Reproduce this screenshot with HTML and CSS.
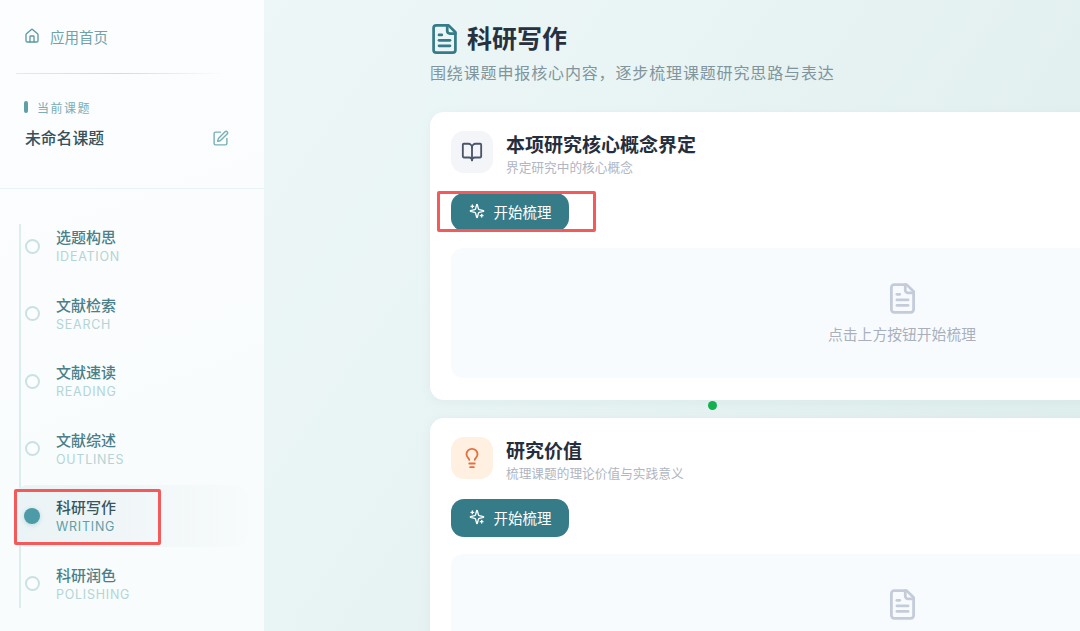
FILE: index.html
```html
<!DOCTYPE html>
<html lang="zh-CN">
<head>
<meta charset="utf-8">
<title>科研写作</title>
<link rel="stylesheet" href="styles.css">
</head>
<body>
<div class="app">
  <aside class="sidebar">
    <div class="side-top">
      <a class="home"><svg class="ic-home" viewBox="0 0 24 24"><path d="M15 21v-8a1 1 0 0 0-1-1h-4a1 1 0 0 0-1 1v8"/><path d="M3 10a2 2 0 0 1 .709-1.528l7-5.999a2 2 0 0 1 2.582 0l7 5.999A2 2 0 0 1 21 10v9a2 2 0 0 1-2 2H5a2 2 0 0 1-2-2z"/></svg><span>应用首页</span></a>
      <div class="side-rule"></div>
      <div class="cur-label"><i class="cur-bar"></i><span>当前课题</span></div>
      <div class="cur-row">
        <span class="cur-name">未命名课题</span>
        <svg class="ic-edit" viewBox="0 0 24 24"><path d="M12 3H5a2 2 0 0 0-2 2v14a2 2 0 0 0 2 2h14a2 2 0 0 0 2-2v-7"/><path d="M18.375 2.625a1 1 0 0 1 3 3l-9.013 9.014a2 2 0 0 1-.853.505l-2.873.84a.5.5 0 0 1-.62-.62l.84-2.873a2 2 0 0 1 .506-.852z"/></svg>
      </div>
    </div>
    <ul class="steps">
      <li class="step"><i class="dot"></i><div><div class="step-cn">选题构思</div><div class="step-en">IDEATION</div></div></li>
      <li class="step"><i class="dot"></i><div><div class="step-cn">文献检索</div><div class="step-en">SEARCH</div></div></li>
      <li class="step"><i class="dot"></i><div><div class="step-cn">文献速读</div><div class="step-en">READING</div></div></li>
      <li class="step"><i class="dot"></i><div><div class="step-cn">文献综述</div><div class="step-en">OUTLINES</div></div></li>
      <li class="step active"><i class="dot"></i><div><div class="step-cn">科研写作</div><div class="step-en">WRITING</div></div></li>
      <li class="step"><i class="dot"></i><div><div class="step-cn">科研润色</div><div class="step-en">POLISHING</div></div></li>
    </ul>
  </aside>
  <main class="main">
    <header class="head">
      <div class="head-row">
        <svg class="ic-doc" viewBox="3 1 18 22"><path d="M15 2H6a2 2 0 0 0-2 2v16a2 2 0 0 0 2 2h12a2 2 0 0 0 2-2V7Z"/><path d="M14 2v4a2 2 0 0 0 2 2h4"/><path d="M10 9H8"/><path d="M16 13H8"/><path d="M16 17H8"/></svg>
        <h1>科研写作</h1>
      </div>
      <p class="head-sub">围绕课题申报核心内容，逐步梳理课题研究思路与表达</p>
    </header>

    <section class="card">
      <div class="card-head">
        <div class="card-ic"><svg class="ic-book" viewBox="0 0 24 24"><path d="M12 7v14"/><path d="M3 18a1 1 0 0 1-1-1V4a1 1 0 0 1 1-1h5a4 4 0 0 1 4 4 4 4 0 0 1 4-4h5a1 1 0 0 1 1 1v13a1 1 0 0 1-1 1h-6a3 3 0 0 0-3 3 3 3 0 0 0-3-3z"/></svg></div>
        <div><h2>本项研究核心概念界定</h2><p>界定研究中的核心概念</p></div>
      </div>
      <button class="btn"><svg class="ic-spark" viewBox="0 0 24 24"><path d="M9.937 15.5A2 2 0 0 0 8.5 14.063l-6.135-1.582a.5.5 0 0 1 0-.962L8.5 9.936A2 2 0 0 0 9.937 8.5l1.582-6.135a.5.5 0 0 1 .963 0L14.063 8.5A2 2 0 0 0 15.5 9.937l6.135 1.581a.5.5 0 0 1 0 .964L15.5 14.063a2 2 0 0 0-1.437 1.437l-1.582 6.135a.5.5 0 0 1-.963 0z"/><path d="M5 3v4"/><path d="M3 5h4"/><path d="M19 17v4"/><path d="M17 19h4"/></svg><span>开始梳理</span></button>
      <div class="empty">
        <svg class="ic-empty" viewBox="3 1 18 22"><path d="M15 2H6a2 2 0 0 0-2 2v16a2 2 0 0 0 2 2h12a2 2 0 0 0 2-2V7Z"/><path d="M14 2v4a2 2 0 0 0 2 2h4"/><path d="M10 9H8"/><path d="M16 13H8"/><path d="M16 17H8"/></svg>
        <span>点击上方按钮开始梳理</span>
      </div>
    </section>

    <section class="card">
      <div class="card-head">
        <div class="card-ic orange"><svg class="ic-bulb" viewBox="0 0 24 24"><path d="M15 14c.2-1 .7-1.7 1.5-2.5 1-.9 1.5-2.2 1.5-3.5A6 6 0 0 0 6 8c0 1 .2 2.2 1.5 3.5.7.7 1.3 1.5 1.5 2.5"/><path d="M9 18h6"/><path d="M10 22h4"/></svg></div>
        <div><h2>研究价值</h2><p>梳理课题的理论价值与实践意义</p></div>
      </div>
      <button class="btn"><svg class="ic-spark" viewBox="0 0 24 24"><path d="M9.937 15.5A2 2 0 0 0 8.5 14.063l-6.135-1.582a.5.5 0 0 1 0-.962L8.5 9.936A2 2 0 0 0 9.937 8.5l1.582-6.135a.5.5 0 0 1 .963 0L14.063 8.5A2 2 0 0 0 15.5 9.937l6.135 1.581a.5.5 0 0 1 0 .964L15.5 14.063a2 2 0 0 0-1.437 1.437l-1.582 6.135a.5.5 0 0 1-.963 0z"/><path d="M5 3v4"/><path d="M3 5h4"/><path d="M19 17v4"/><path d="M17 19h4"/></svg><span>开始梳理</span></button>
      <div class="empty">
        <svg class="ic-empty" viewBox="3 1 18 22"><path d="M15 2H6a2 2 0 0 0-2 2v16a2 2 0 0 0 2 2h12a2 2 0 0 0 2-2V7Z"/><path d="M14 2v4a2 2 0 0 0 2 2h4"/><path d="M10 9H8"/><path d="M16 13H8"/><path d="M16 17H8"/></svg>
      </div>
    </section>
  </main>
  <div class="mark mark-btn"></div>
  <div class="mark mark-nav"></div>
  <i class="status-dot"></i>
</div>
</body>
</html>
```
FILE: styles.css
```css
* { box-sizing: border-box; }
html, body { margin: 0; height: 100%; overflow: hidden; }
body { font-family: Inter, "Noto Sans CJK SC", sans-serif; color: #2a3342; }
h1, h2, p, ul { margin: 0; padding: 0; }
svg { fill: none; stroke: currentColor; stroke-linecap: round; stroke-linejoin: round; stroke-width: 2; flex: none; display: block; }

.app { position: relative; display: flex; width: 1080px; height: 631px; overflow: hidden; background: linear-gradient(125deg, #f0f8f8 0%, #e9f4f4 45%, #dcedeb 100%); }

.sidebar { width: 264px; flex: none; background: linear-gradient(160deg, #fcfdfe 0%, #fafcfd 50%, #f8fcfd 100%); }
.side-top { height: 189px; padding: 23px 16px 0; border-bottom: 1px solid #e9f2f4; }
.home { display: flex; align-items: center; gap: 10px; height: 26px; padding-left: 8px; color: #6ea3aa; font-size: 14.5px; }
.ic-home { width: 16px; height: 16px; color: #5d9aa1; }
.side-rule { width: 208px; height: 1px; margin-top: 24px; background: linear-gradient(90deg, rgba(190,222,222,.5), #c6e2e2 50%, rgba(198,226,226,0)); }
.cur-label { display: flex; align-items: center; gap: 9px; margin: 24px 0 0 8px; height: 18px; color: #7aaeb4; font-size: 12px; letter-spacing: 1.5px; }
.cur-bar { width: 4px; height: 12px; border-radius: 2px; background: #5f9fa8; }
.cur-row { display: flex; align-items: center; justify-content: space-between; width: 204px; margin: 9px 0 0 9px; height: 24px; }
.cur-name { font-size: 15.8px; font-weight: 500; color: #37505a; }
.ic-edit { width: 17px; height: 17px; color: #79b0b6; margin: 3px 0 0 0; }

.steps { position: relative; list-style: none; display: flex; flex-direction: column; gap: 5.5px; margin: 26px 16px 0 14px; }
.steps::before { content: ""; position: absolute; left: 5px; top: 9px; width: 2px; height: 384px; background: #dcedee; }
.step { position: relative; display: flex; align-items: center; gap: 16.5px; height: 62px; padding-left: 10.5px; border-radius: 14px; }
.dot { width: 15px; height: 15px; flex: none; border-radius: 50%; border: 2.5px solid #c9e2e1; background: #fbfdfe; }
.step > div { padding-top: 2px; }
.step-cn { height: 20px; line-height: 20px; font-size: 15px; font-weight: 500; color: #4a7f88; }
.step-en { height: 18px; line-height: 18px; font-size: 12.5px; letter-spacing: .75px; color: #b3d5d5; }
.step.active { background: linear-gradient(90deg, #eaf3f5 0%, #f2f7f9 60%, #f7fbfb 100%); }
.step.active .dot { width: 16px; height: 16px; margin-left: -.5px; margin-right: -.5px; border: 0; background: #4c9ba6; box-shadow: 0 1px 4px rgba(76,155,166,.3); }
.step.active .step-cn { color: #37565e; }
.step.active .step-en { color: #5f9ea6; }

.main { flex: none; width: 816px; padding: 0 0 0 166px; }
.head { height: 112px; padding-top: 24px; }
.head-row { display: flex; align-items: center; gap: 10px; height: 30px; }
.ic-doc { width: 25px; height: 30px; margin-left: 2px; color: #367b88; }
h1 { font-size: 25px; font-weight: 600; line-height: 30px; color: #273240; }
.head-sub { margin-top: 6px; font-size: 16px; letter-spacing: .86px; line-height: 26px; color: #80959d; }

.card { width: 944px; height: 288px; margin-bottom: 18px; padding: 19px 21px 0; background: #fff; border-radius: 14px; box-shadow: 0 2px 10px rgba(120,170,170,.08); }
.card-head { display: flex; gap: 13px; height: 42px; }
.card-ic { width: 42px; height: 42px; flex: none; display: flex; align-items: center; justify-content: center; border-radius: 13px; background: #f3f5f9; }
.card-ic.orange { background: #fff0e2; }
.ic-book { width: 22px; height: 22px; color: #4a5568; }
.ic-bulb { width: 22px; height: 22px; color: #e4703c; }
h2 { padding-top: 1px; font-size: 19px; font-weight: 600; line-height: 26px; color: #252e3c; }
.card-head p { font-size: 12.7px; line-height: 17px; color: #b0b6c2; }
.card-ic + div { margin-top: 1px; }
.btn { display: flex; align-items: center; gap: 9px; width: 118px; height: 38px; margin-top: 20px; padding: 0 0 2px 17px; border: 0; border-radius: 13px; background: #367b88; color: #fff; font-family: inherit; font-size: 14.5px; }
.ic-spark { width: 16px; height: 16px; margin-left: .5px; }
.empty { display: flex; flex-direction: column; align-items: center; gap: 11px; height: 130px; margin-top: 17px; padding-top: 35px; border-radius: 12px; background: #f8fbfd; color: #a9b0bc; font-size: 14.8px; line-height: 20px; }
.ic-empty { width: 25px; height: 31px; color: #c5ccd9; }

.mark { position: absolute; border: 3px solid #f45a5a; border-radius: 2px; pointer-events: none; }
.mark-btn { left: 437px; top: 191px; width: 159px; height: 41px; }
.mark-nav { left: 14px; top: 489px; width: 147px; height: 56px; }
.status-dot { position: absolute; left: 708px; top: 401px; width: 9px; height: 9px; border-radius: 50%; background: #12b04f; }
```
